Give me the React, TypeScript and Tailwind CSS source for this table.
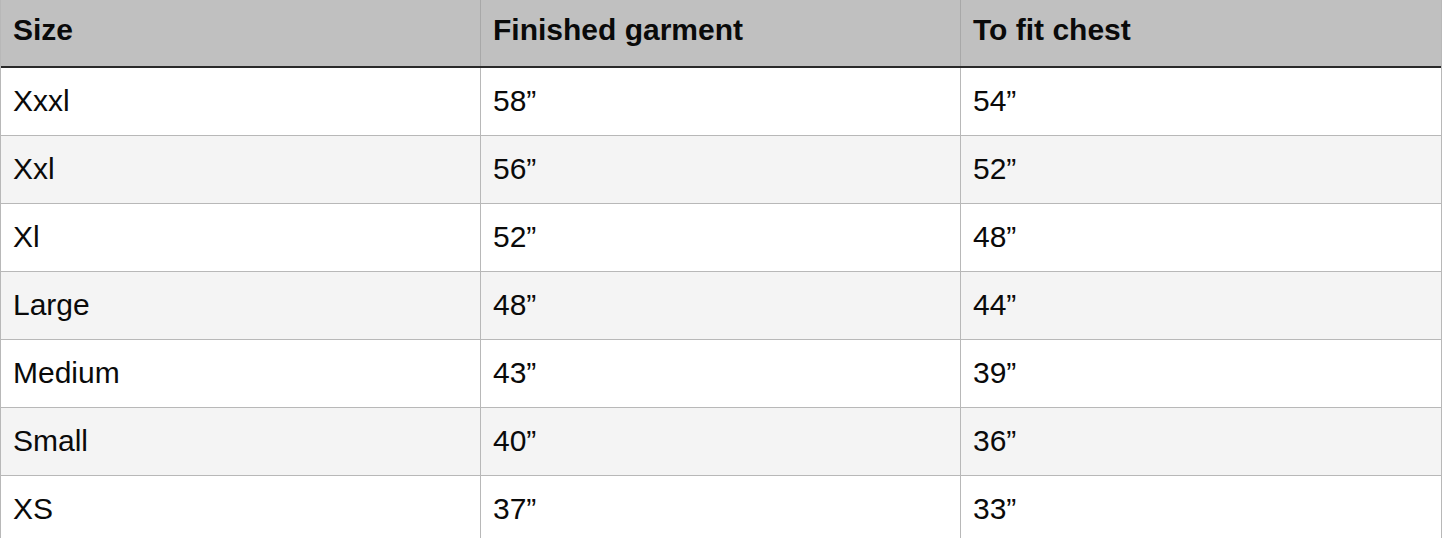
const rows = [
  ["Xxxl", "58”", "54”"],
  ["Xxl", "56”", "52”"],
  ["Xl", "52”", "48”"],
  ["Large", "48”", "44”"],
  ["Medium", "43”", "39”"],
  ["Small", "40”", "36”"],
  ["XS", "37”", "33”"],
];

export default function App() {
  return (
    <div className="h-[538px] overflow-hidden bg-white font-['Liberation_Sans',Arial,sans-serif] text-[30px] text-[#0a0a0a]">
      <div className="w-[1442px] border-x border-[#b8b8b8]">
        <div className="grid h-[68px] grid-cols-[480px_480px_480px] border-b-2 border-[#2a2a2a] bg-[#c0c0c0] font-bold">
          <div className="flex items-center border-r border-[#a8a8a8] pl-3 pb-2">Size</div>
          <div className="flex items-center border-r border-[#a8a8a8] pl-3 pb-2">Finished garment</div>
          <div className="flex items-center pl-3 pb-2">To fit chest</div>
        </div>
        {rows.map((r, i) => (
          <div
            key={r[0]}
            className={`grid h-[68px] grid-cols-[480px_480px_480px] border-b border-[#b8b8b8] ${
              i % 2 === 1 ? "bg-[#f4f4f4]" : "bg-white"
            }`}
          >
            <div className="flex items-center border-r border-[#b8b8b8] pl-3 pb-0.5">{r[0]}</div>
            <div className="flex items-center border-r border-[#b8b8b8] pl-3 pb-0.5">{r[1]}</div>
            <div className="flex items-center pl-3 pb-0.5">{r[2]}</div>
          </div>
        ))}
      </div>
    </div>
  );
}
